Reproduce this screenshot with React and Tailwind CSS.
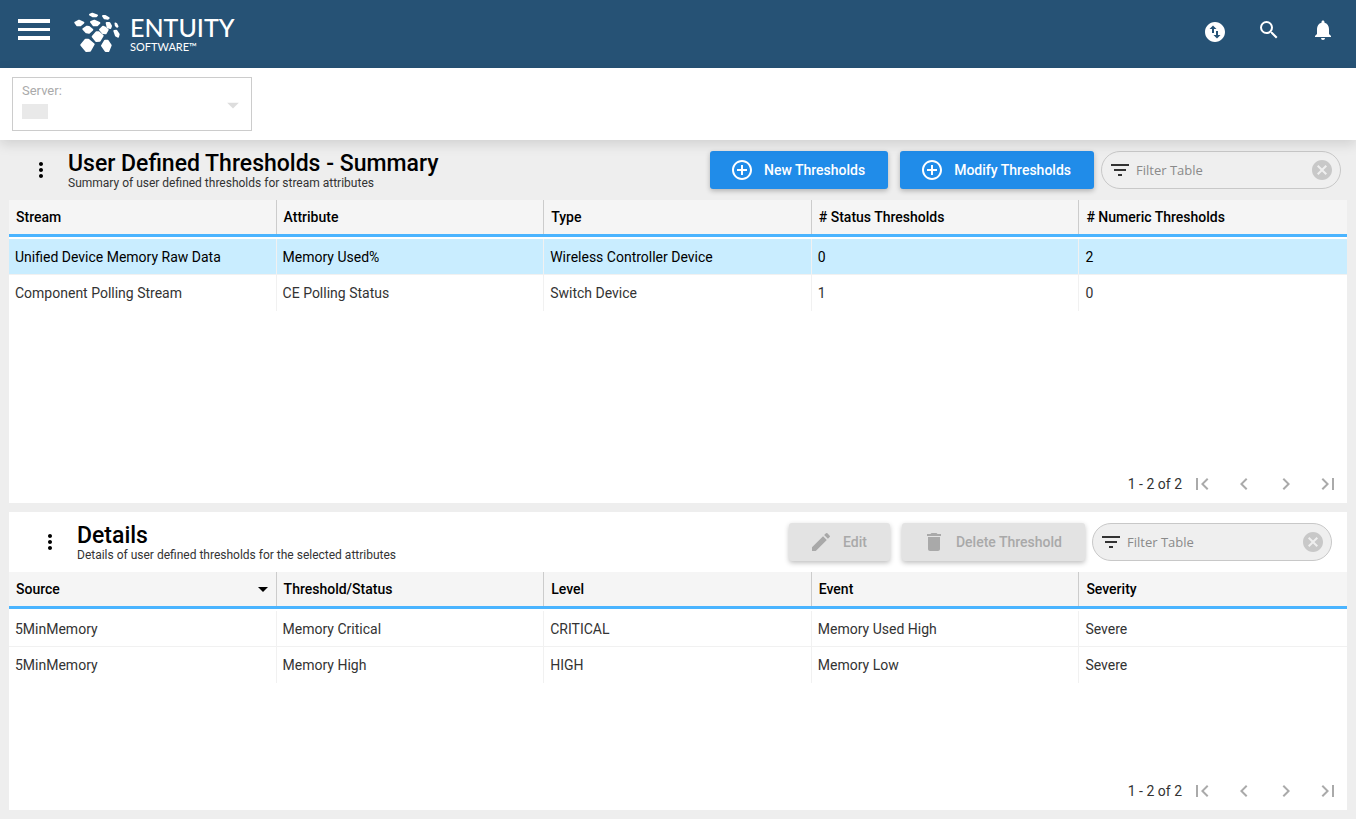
import React, { useState } from 'react';
import {
  MdAddCircleOutline,
  MdArrowDropDown,
  MdCancel,
  MdChevronLeft,
  MdChevronRight,
  MdDelete,
  MdEdit,
  MdFilterList,
  MdFirstPage,
  MdLastPage,
  MdMoreVert,
  MdNotifications,
  MdSearch,
  MdSwapVerticalCircle,
} from 'react-icons/md';

const summaryColumns = ['Stream', 'Attribute', 'Type', '# Status Thresholds', '# Numeric Thresholds'];
const summaryRows = [
  ['Unified Device Memory Raw Data', 'Memory Used%', 'Wireless Controller Device', '0', '2'],
  ['Component Polling Stream', 'CE Polling Status', 'Switch Device', '1', '0'],
];

const detailColumns = ['Source', 'Threshold/Status', 'Level', 'Event', 'Severity'];
const detailRows = [
  ['5MinMemory', 'Memory Critical', 'CRITICAL', 'Memory Used High', 'Severe'],
  ['5MinMemory', 'Memory High', 'HIGH', 'Memory Low', 'Severe'],
];

export default function App() {
  const [selectedRow, setSelectedRow] = useState(0);

  return (
    <div className="min-h-screen flex flex-col bg-[#eeeeee] font-[Roboto,sans-serif] text-sm text-[#333333]">
      <TopBar />
      <ServerBar />

      <main className="flex-1 flex flex-col pb-[9px]">
        <section className="flex-1 flex flex-col">
          <PanelHeader title="User Defined Thresholds - Summary" subtitle="Summary of user defined thresholds for stream attributes">
            <ActionButton icon={MdAddCircleOutline}>New Thresholds</ActionButton>
            <ActionButton icon={MdAddCircleOutline}>Modify Thresholds</ActionButton>
          </PanelHeader>
          <div className="flex-1 flex flex-col mx-[9px] bg-white">
            <DataTable columns={summaryColumns} rows={summaryRows} selected={selectedRow} onSelect={setSelectedRow} />
            <Pager />
          </div>
        </section>

        <section className="min-h-[298px] flex flex-col mt-[9px] mx-[9px] bg-white">
          <PanelHeader title="Details" subtitle="Details of user defined thresholds for the selected attributes">
            <ActionButton icon={MdEdit} disabled>Edit</ActionButton>
            <ActionButton icon={MdDelete} disabled>Delete Threshold</ActionButton>
          </PanelHeader>
          <DataTable columns={detailColumns} rows={detailRows} sorted="Source" />
          <Pager />
        </section>
      </main>
    </div>
  );
}

function TopBar() {
  return (
    <header className="h-[68px] shrink-0 flex items-start bg-[#265275] text-white pl-[18px] pr-[21px]">
      <button type="button" aria-label="Menu" className="mt-[19px] cursor-pointer">
        <svg width="32" height="22" viewBox="0 0 32 22" fill="currentColor">
          <rect y="0" width="32" height="4" />
          <rect y="9" width="32" height="3" />
          <rect y="17" width="32" height="4" />
        </svg>
      </button>
      <a href="#" aria-label="Entuity Software" className="flex items-start ml-6 mt-3">
        <Logo />
        <span className="flex flex-col ml-[10px] font-[Lato,sans-serif]">
          <span className="text-[25px] leading-[30px] font-medium">ENTUITY</span>
          <span className="text-[11px] leading-[10px]">SOFTWARE™</span>
        </span>
      </a>
      <nav className="ml-auto mt-[18px] flex gap-[30px]">
        <button type="button" aria-label="Transfer" className="pt-0.5 cursor-pointer">
          <MdSwapVerticalCircle size={24} />
        </button>
        <button type="button" aria-label="Search" className="pb-0.5 cursor-pointer">
          <MdSearch size={24} />
        </button>
        <button type="button" aria-label="Notifications" className="pb-0.5 cursor-pointer">
          <MdNotifications size={24} />
        </button>
      </nav>
    </header>
  );
}

function Logo() {
  return (
    <svg width="46" height="40" viewBox="23 18 138 120" fill="currentColor" stroke="currentColor" strokeWidth="6" strokeLinejoin="round">
      <path d="M71 26 L78 23 L92 28 L89 31 L80 31 Z" />
      <path d="M110 30 L117 30 L127 36 L125 38 L115 37 Z" />
      <path d="M27 50 L38 44 L51 50 L42 58 L33 58 Z" />
      <path d="M74 48 L84 44 L99 51 L92 58 L82 58 Z" />
      <path d="M121 51 L129 51 L134 60 L132 66 L124 64 Z" />
      <path d="M147 52 L150 53 L154 61 L153 63 L148 59 Z" strokeWidth="5" />
      <path d="M51 69 L62 62 L68 63 L78 71 L68 80 L60 79 Z" />
      <path d="M101 71 L110 62 L115 64 L124 71 L118 82 L110 81 Z" />
      <path d="M144 75 L150 74 L157 85 L155 92 L149 89 Z" />
      <path d="M79 92 L90 79 L97 79 L109 89 L100 104 L90 105 Z" />
      <path d="M45 117 L58 101 L66 101 L82 115 L71 134 L60 135 Z" />
      <path d="M107 119 L116 104 L124 104 L133 118 L126 135 L118 135 Z" />
    </svg>
  );
}

function ServerBar() {
  return (
    <div className="relative z-10 h-[72px] shrink-0 bg-white px-3 pt-[9px] shadow-[0_4px_12px_rgba(0,0,0,0.13)]">
      <div className="w-60 h-[54px] flex border border-[#cccccc] pl-[9px] pr-1">
        <div className="flex-1 flex flex-col gap-[5px] pt-[5px]">
          <label htmlFor="server" className="text-[13px] leading-4 text-[#aaaaaa]">Server:</label>
          <div className="flex">
            <span className="w-[26px] h-[15px] bg-[#e9e9e9]"></span>
            <select id="server" disabled className="flex-1 h-[15px] appearance-none bg-transparent"></select>
          </div>
        </div>
        <MdArrowDropDown size={28} className="mt-[13px] text-[#dddddd]" />
      </div>
    </div>
  );
}

function PanelHeader({ title, subtitle, children }) {
  return (
    <div className="h-[60px] shrink-0 flex items-center pl-[29px] pr-[15px]">
      <button type="button" aria-label={`${title} options`} className="text-black cursor-pointer">
        <MdMoreVert size={24} />
      </button>
      <div className="ml-[15px] pt-0.5">
        <h2 className="text-[23px] leading-[26px] -mb-0.5 font-medium text-black">{title}</h2>
        <p className="text-xs leading-4">{subtitle}</p>
      </div>
      <div className="ml-auto flex gap-3">{children}</div>
      <FilterBox label={`Filter ${title}`} />
    </div>
  );
}

function ActionButton({ icon: Icon, disabled, children }) {
  return (
    <button
      type="button"
      disabled={disabled}
      className={`h-[38px] flex items-center gap-[10px] pl-5 pr-[23px] rounded-[3px] font-medium shadow-[0_2px_5px_rgba(0,0,0,0.25)] ${disabled ? 'bg-[#e3e3e3] text-[#a9a9a9]' : 'bg-[#208ce9] text-white cursor-pointer'}`}
    >
      <Icon size={24} />
      {children}
    </button>
  );
}

function FilterBox({ label }) {
  const [filter, setFilter] = useState('');

  return (
    <div className="w-60 h-[38px] flex items-center ml-[7px] px-[6px] rounded-full border border-[#c8c8c8] bg-[#efefef]">
      <MdFilterList size={24} className="shrink-0" />
      <input
        type="text"
        aria-label={label}
        placeholder="Filter Table"
        value={filter}
        onChange={(e) => setFilter(e.target.value)}
        className="flex-1 min-w-0 ml-1 font-['Open_Sans',sans-serif] text-[13px] outline-none placeholder:text-[#8a8a8a]"
      />
      <button type="button" aria-label="Clear filter" onClick={() => setFilter('')} className="text-[#c8c8c8] cursor-pointer">
        <MdCancel size={24} />
      </button>
    </div>
  );
}

function DataTable({ columns, rows, sorted, selected, onSelect }) {
  return (
    <table className="w-full table-fixed border-separate border-spacing-0 text-left">
      <thead>
        <tr>
          {columns.map((column) => (
            <th key={column} className="h-[37px] p-0 bg-[#f5f5f5] border-b-[3px] border-[#4ab4ff] font-medium text-black">
              <div className={`h-[34px] flex items-center justify-between pl-[7px] pr-px ${column === columns[columns.length - 1] ? '' : 'border-r border-[#cccccc]'}`}>
                {column}
                {column === sorted && <MdArrowDropDown size={24} />}
              </div>
            </th>
          ))}
        </tr>
      </thead>
      <tbody className="before:block before:h-[2px] before:content-['']">
        {rows.map((row, index) => (
          <tr
            key={index}
            onClick={() => onSelect && onSelect(index)}
            className={index === selected ? 'bg-[#c9edff] text-black' : ''}
          >
            {row.map((value, i) => (
              <td
                key={i}
                className={`h-9 py-0 px-[6px] border-[#f1f1f1] ${i < row.length - 1 ? 'border-r' : ''} ${index < rows.length - 1 ? 'border-b' : ''}`}
              >
                {value}
              </td>
            ))}
          </tr>
        ))}
      </tbody>
    </table>
  );
}

function Pager() {
  return (
    <div className="h-[38px] mt-auto flex items-center justify-end pr-[7px]">
      <span className="mr-2">1 - 2 of 2</span>
      <div className="flex gap-[18px] text-[#aaaaaa]">
        <button type="button" disabled aria-label="First page"><MdFirstPage size={24} /></button>
        <button type="button" disabled aria-label="Previous page"><MdChevronLeft size={24} /></button>
        <button type="button" disabled aria-label="Next page"><MdChevronRight size={24} /></button>
        <button type="button" disabled aria-label="Last page"><MdLastPage size={24} /></button>
      </div>
    </div>
  );
}
